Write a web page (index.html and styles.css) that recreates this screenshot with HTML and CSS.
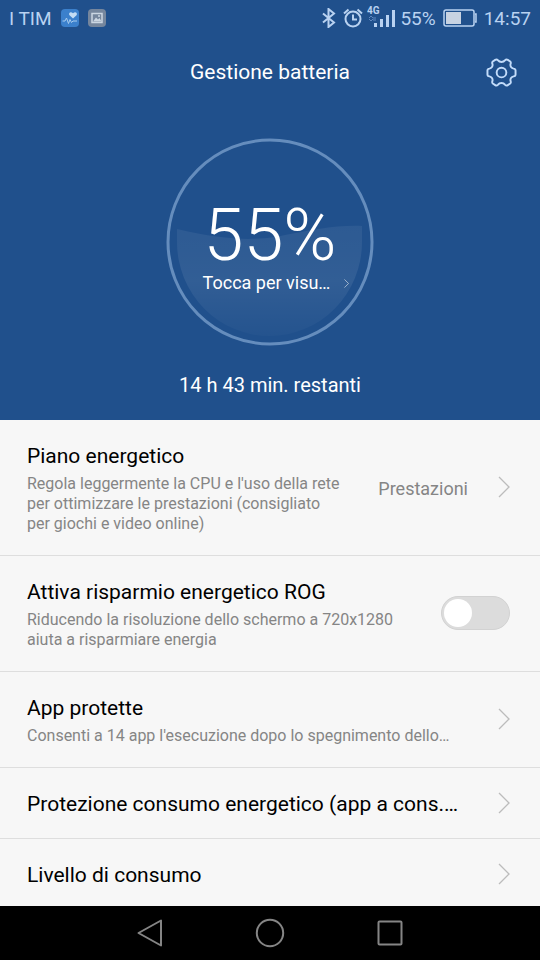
FILE: index.html
```html
<!DOCTYPE html>
<html lang="it">
<head>
<meta charset="utf-8">
<meta name="viewport" content="width=device-width, initial-scale=1">
<title>Gestione batteria</title>
<link rel="stylesheet" href="styles.css">
</head>
<body>
<svg class="defs" aria-hidden="true">
  <symbol id="chevron" viewBox="0 0 12 22"><path d="M1 1l10 10L1 21" fill="none" stroke="currentColor" stroke-width="1.3"/></symbol>
</svg>
<div class="screen">
  <header class="hero">
    <div class="status">
      <span>I TIM</span>
      <svg class="app-icon" width="18" height="18" viewBox="0 0 18 18" aria-hidden="true">
        <rect width="18" height="18" rx="4" fill="#3b80cc"/>
        <path d="M12 9.500L8.500 6.200C7 4.300 9.500 1.800 12 4.200c2.500-2.400 5 .1 3.500 2z" fill="#c3dcf4"/>
        <path d="M1.500 12h2.500l1.500-3 2 5.500 1.500-4 1.500 3 1.500-1.500h4" fill="none" stroke="#a7cbee" stroke-width="1"/>
      </svg>
      <svg class="app-icon" width="18" height="18" viewBox="0 0 18 18" aria-hidden="true">
        <rect width="18" height="18" rx="4" fill="#75869d"/>
        <rect x="4" y="4.500" width="10" height="9" fill="none" stroke="#cbd6e2" stroke-width="1.500"/>
        <path d="M5 12.500l3-4 2 2 1.500-1.500 2 3.500z" fill="#cbd6e2"/>
        <circle cx="11" cy="7" r="1" fill="#cbd6e2"/>
      </svg>
      <div class="indicators">
        <svg width="14" height="20" viewBox="0 0 14 20" role="img" aria-label="Bluetooth"><path d="M1 5.500l11 9-5.500 4.500V1L12 5.500l-11 9" fill="none" stroke="currentColor" stroke-width="2"/></svg>
        <svg class="alarm" width="20" height="20" viewBox="0 0 20 20" role="img" aria-label="Sveglia"><g fill="none" stroke="currentColor" stroke-width="2"><circle cx="10" cy="11" r="7.500"/><path d="M10 6.500V11.500h4M1 5.500l4.500-4M19 5.500l-4.500-4"/></g></svg>
        <svg class="signal" width="30" height="24" viewBox="0 0 30 24" role="img" aria-label="Segnale 4G">
          <text class="network" x="0" y="8">4G</text>
          <path d="M2 12l2-2 2 2M2 13l2 2 2-2M6 12h3M6 14h3" fill="none" stroke="#5f88c0" stroke-width="1"/>
          <path d="M7 17h3v4H7zM13 13h3v8h-3zM19 9h3v12h-3zM25 4h3v17h-3z" fill="currentColor"/>
        </svg>
        <span>55%</span>
        <svg class="battery" width="34" height="18" viewBox="0 0 34 18" role="img" aria-label="Batteria"><rect x="1" y="1" width="30" height="16" rx="2" fill="none" stroke="currentColor" stroke-width="1.500"/><rect x="3" y="3" width="15" height="12" fill="#c8d3e2"/><path d="M32 5h1v8h-1" fill="none" stroke="currentColor" stroke-width="1.500"/></svg>
        <time>14:57</time>
      </div>
    </div>
    <div class="titlebar">
      <h1>Gestione batteria</h1>
      <button class="settings" aria-label="Impostazioni">
        <svg width="31" height="31" viewBox="0 0 32 32" aria-hidden="true"><g fill="none" stroke="currentColor" stroke-width="2"><circle cx="16" cy="16" r="5"/><path stroke-linejoin="round" d="M12.500 3.500C14 5.600 18 5.600 19.500 3.500Q21 2 22.500 3L25 4.600Q26 5.500 25.400 7C24.600 9.500 26.300 11.600 28.500 12Q30.500 12.300 30.500 14V18Q30.500 19.700 28.500 20C26.300 20.400 24.600 22.500 25.400 25Q26 26.500 25 27.400L22.500 29Q21 30 19.500 28.500C18 26.400 14 26.400 12.500 28.500Q11 30 9.500 29L7 27.400Q6 26.500 6.600 25C7.400 22.500 5.700 20.400 3.500 20Q1.500 19.700 1.500 18V14Q1.500 12.300 3.500 12C5.700 11.600 7.400 9.500 6.600 7Q6 5.500 7 4.600L9.500 3Q11 2 12.500 3.500Z"/></g></svg>
      </button>
    </div>
    <button class="gauge">
      <svg class="wave" viewBox="0 0 208 208" aria-hidden="true">
        <defs>
          <linearGradient id="water" x1="0" y1="0" x2="0" y2="1"><stop offset="0" stop-color="#fff" stop-opacity=".06"/><stop offset=".5" stop-color="#fff" stop-opacity=".08"/><stop offset="1" stop-color="#fff" stop-opacity=".02"/></linearGradient>
        </defs>
        <path d="M11 91C55 101 80 103 110 99C145 92 170 87 196 88V104A92.500 94 0 0 1 11 104Z" fill="url(#water)"/>
        <circle cx="104" cy="104" r="102" fill="none" stroke="#658dbd" stroke-width="3"/>
      </svg>
      <span class="level">55%</span>
      <span class="hint"><span>Tocca per visu…</span><svg width="5" height="9" aria-hidden="true"><use href="#chevron"/></svg></span>
    </button>
    <p class="remaining">14 h 43 min. restanti</p>
  </header>
  <main class="list">
    <a class="row" href="#piano">
      <span class="text"><span class="name">Piano energetico</span><span class="desc">Regola leggermente la CPU e l'uso della rete per ottimizzare le prestazioni (consigliato per giochi e video online)</span></span>
      <span class="value">Prestazioni</span>
      <svg class="chevron" aria-hidden="true"><use href="#chevron"/></svg>
    </a>
    <label class="row">
      <span class="text"><span class="name">Attiva risparmio energetico ROG</span><span class="desc">Riducendo la risoluzione dello schermo a 720x1280 aiuta a risparmiare energia</span></span>
      <input class="switch" type="checkbox" role="switch">
    </label>
    <a class="row" href="#protette">
      <span class="text"><span class="name">App protette</span><span class="desc">Consenti a 14 app l'esecuzione dopo lo spegnimento dello…</span></span>
      <svg class="chevron" aria-hidden="true"><use href="#chevron"/></svg>
    </a>
    <a class="row" href="#protezione">
      <span class="text"><span class="name">Protezione consumo energetico (app a cons.…</span></span>
      <svg class="chevron" aria-hidden="true"><use href="#chevron"/></svg>
    </a>
    <a class="row" href="#livello">
      <span class="text"><span class="name">Livello di consumo</span></span>
      <svg class="chevron" aria-hidden="true"><use href="#chevron"/></svg>
    </a>
  </main>
  <nav class="navbar">
    <button aria-label="Indietro"><svg width="30" height="30" viewBox="0 0 30 30"><path d="M26 2.500v25L3.500 15z"/></svg></button>
    <button aria-label="Home"><svg width="30" height="30" viewBox="0 0 30 30"><circle cx="15" cy="15" r="13.200"/></svg></button>
    <button aria-label="Recenti"><svg width="30" height="30" viewBox="0 0 30 30"><rect x="3.500" y="3.500" width="23" height="23" rx="1"/></svg></button>
  </nav>
</div>
</body>
</html>
```

FILE: styles.css
```css
* { box-sizing: border-box; }
body {
  margin: 0;
  font-family: Roboto, "Liberation Sans", sans-serif;
  background: #f7f7f7;
}
button {
  padding: 0;
  border: 0;
  background: none;
  color: inherit;
  font: inherit;
}
svg { display: block; flex: none; }
.defs { display: none; }
.screen {
  display: flex;
  flex-direction: column;
  height: 100vh;
}
.hero {
  flex: none;
  display: flex;
  flex-direction: column;
  padding-bottom: 22px;
  background: #20508c;
  color: #fff;
}
.status {
  display: flex;
  align-items: center;
  gap: 9px;
  height: 36px;
  padding: 0 9px;
  color: #b9d2f1;
  font-size: 19px;
}
.indicators {
  display: flex;
  align-items: center;
  gap: 7px;
  margin-left: auto;
}
.signal { margin: 0 -4px 0 -3px; }
.network {
  fill: currentColor;
  font-size: 10px;
  font-weight: 700;
}
.titlebar {
  display: grid;
  grid-template-columns: 1fr auto 1fr;
  align-items: center;
  height: 72px;
  padding: 0 23px;
}
.titlebar h1 {
  grid-column: 2;
  margin: 0;
  font-size: 21px;
  font-weight: 400;
}
.settings {
  justify-self: end;
  color: #c3dcfa;
}
.gauge {
  position: relative;
  display: flex;
  flex-direction: column;
  align-items: center;
  align-self: center;
  width: 208px;
  height: 208px;
  margin-top: 30px;
  padding-top: 60px;
}
.wave {
  position: absolute;
  inset: 0;
}
.level {
  font-size: 72px;
  font-weight: 300;
  line-height: 75px;
}
.hint {
  display: flex;
  align-items: center;
  gap: 14px;
  padding-left: 12px;
  font-size: 18px;
  line-height: 20px;
}
.remaining {
  margin: 26px 0 0;
  text-align: center;
  font-size: 20px;
  line-height: 26px;
}
.list {
  flex: 1;
  min-height: 0;
  overflow-y: auto;
  scrollbar-width: none;
}
.row {
  display: flex;
  align-items: center;
  padding: 23px 30px 21px 27px;
  border-bottom: 1px solid #dedede;
  color: #000;
  text-decoration: none;
}
.text {
  flex: 1;
  min-width: 0;
  display: flex;
  flex-direction: column;
  gap: 5px;
}
.name {
  font-size: 21px;
  line-height: 26px;
}
.desc {
  color: #858585;
  font-size: 16px;
  line-height: 20px;
}
.name, .desc {
  overflow: hidden;
  text-overflow: ellipsis;
}
.value {
  margin-left: 34px;
  color: #858585;
  font-size: 18px;
}
.chevron {
  width: 12px;
  height: 22px;
  margin: 0 0 3px 30px;
  color: #bcbcbc;
}
.switch {
  appearance: none;
  flex: none;
  display: flex;
  align-items: center;
  width: 69px;
  height: 34px;
  margin: 0 0 3px 30px;
  padding: 2px;
  border: 1px solid #d2d2d2;
  border-radius: 17px;
  background: #dcdcdc;
}
.switch::before {
  content: "";
  width: 28px;
  height: 28px;
  border-radius: 50%;
  background: #fff;
}
.switch:checked { justify-content: flex-end; background: #20508c; }
.navbar {
  flex: none;
  display: flex;
  justify-content: center;
  align-items: center;
  gap: 90px;
  height: 54px;
  background: #000;
}
.navbar svg {
  fill: none;
  stroke: #858585;
  stroke-width: 2;
  stroke-linejoin: round;
}
```
